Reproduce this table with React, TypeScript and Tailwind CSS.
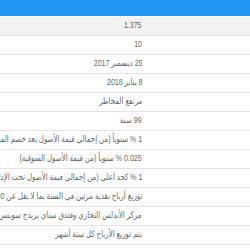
const rows: string[] = [
  '1.375',
  '10',
  '25 ديسمبر 2017',
  '8 يناير 2018',
  'مرتفع المخاطر',
  '99 سنة',
  '1 % سنوياً (من إجمالي قيمة الأصول بعد خصم المطلوبات)',
  '0.025 % سنوياً (من قيمة الأصول السوقية)',
  '1 % كحد أعلى (من إجمالي قيمة الأصول تحت الإدارة)',
  'توزيع أرباح نقدية مرتين في السنة بما لا يقل عن 90% من صافي الأرباح',
  'مركز الأندلس التجاري وفندق سناي بريدج سويتس',
  'يتم توزيع الأرباح كل ستة أشهر',
]

export default function App() {
  return (
    <div className="w-[250px] h-[250px] overflow-hidden bg-white font-['Liberation_Sans','DejaVu_Sans',sans-serif]">
      <div className="h-[17px] bg-[#2196f3] border-b border-white" />
      {rows.map((r, i) => (
        <div
          key={i}
          className={`flex h-[19px] border-b border-[#e3e3e3] ${i === 0 ? 'bg-[#f2f2f2]' : 'bg-white'}`}
        >
          <div
            dir="rtl"
            className="w-[146px] shrink-0 overflow-hidden pr-[4px] flex items-center text-[9px] text-[#666]"
          >
            <span className="inline-block whitespace-nowrap origin-right scale-x-[0.78]">{r}</span>
          </div>
          <div className="flex-1" />
        </div>
      ))}
    </div>
  )
}
